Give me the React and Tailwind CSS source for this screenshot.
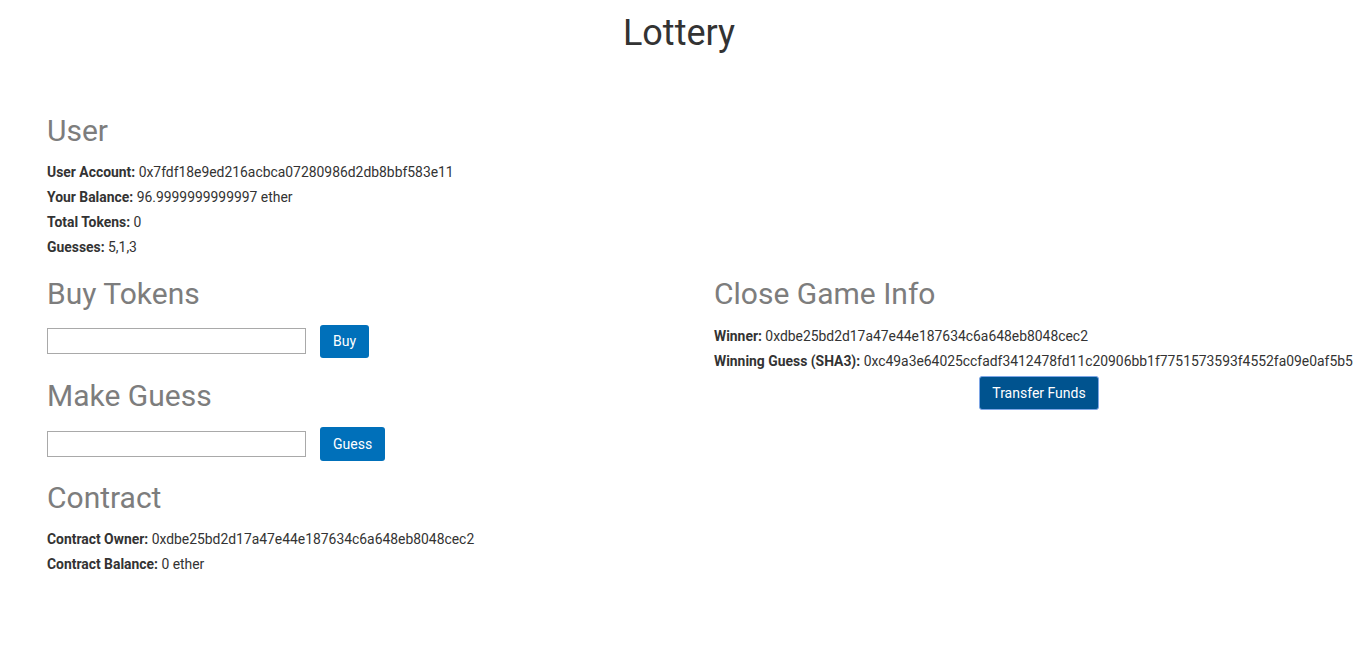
export default function App() {
  const font = { fontFamily: "Roboto, 'Liberation Sans', sans-serif" };
  const H = ({ children, className = "" }) => (
    <h2 className={"text-[30px] leading-[33px] font-normal text-[#7d7d7d] " + className}>{children}</h2>
  );
  const P = ({ label, value }) => (
    <p className="text-[13.9px] leading-[25px] text-[#333] whitespace-nowrap">
      <span className="font-bold">{label}</span> {value}
    </p>
  );
  return (
    <div style={font} className="bg-white min-h-[654px] text-[#333]">
      <h1 className="pt-[13px] text-center text-[36px] leading-[40px] font-normal text-[#333]">Lottery</h1>
      <div className="px-[47px]">
        <H className="mt-[61px]">User</H>
        <div className="mt-[13px]">
          <P label="User Account:" value="0x7fdf18e9ed216acbca07280986d2db8bbf583e11" />
          <P label="Your Balance:" value="96.9999999999997 ether" />
          <P label="Total Tokens:" value="0" />
          <P label="Guesses:" value="5,1,3" />
        </div>
        <div className="grid grid-cols-[667px_1fr] mt-[17px]">
          <div>
            <H>Buy Tokens</H>
            <div className="mt-[14px] flex items-center gap-[14px] h-[34px]">
              <input className="w-[259px] h-[26px] border border-[#a9a9a9] outline-none px-1 text-[14px]" />
              <button className="h-[33px] px-[13px] rounded-[3px] bg-[#0070ba] text-white text-[14px]">Buy</button>
            </div>
            <H className="mt-[20.5px]">Make Guess</H>
            <div className="mt-[15.5px] flex items-center gap-[14px] h-[34px]">
              <input className="w-[259px] h-[26px] border border-[#a9a9a9] outline-none px-1 text-[14px]" />
              <button className="h-[34px] px-[13px] rounded-[3px] bg-[#0070ba] text-white text-[14px]">Guess</button>
            </div>
            <H className="mt-[19.5px]">Contract</H>
            <div className="mt-[13px]">
              <P label="Contract Owner:" value="0xdbe25bd2d17a47e44e187634c6a648eb8048cec2" />
              <P label="Contract Balance:" value="0 ether" />
            </div>
          </div>
          <div>
            <H>Close Game Info</H>
            <div className="mt-[14px]">
              <P label="Winner:" value="0xdbe25bd2d17a47e44e187634c6a648eb8048cec2" />
              <P label="Winning Guess (SHA3):" value="0xc49a3e64025ccfadf3412478fd11c20906bb1f7751573593f4552fa09e0af5b5" />
            </div>
            <div className="w-[650px] flex justify-center mt-[2px]">
              <button className="h-[34px] w-[120px] rounded-[3px] bg-[#00538f] border border-[#7ea6e6] text-white text-[14px]">Transfer Funds</button>
            </div>
          </div>
        </div>
      </div>
    </div>
  );
}
